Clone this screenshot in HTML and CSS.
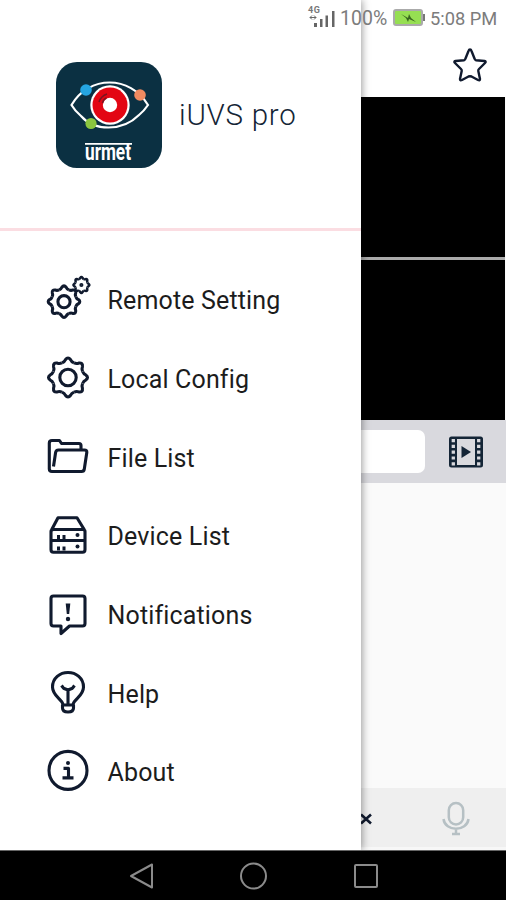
FILE: index.html
```html
<!DOCTYPE html>
<html lang="en">
<head>
<meta charset="utf-8">
<title>iUVS pro</title>
<link rel="stylesheet" href="styles.css">
</head>
<body>
<svg class="defs" aria-hidden="true">
  <defs>
    <path id="tooth" d="M-6-14.6C-3.8-15.5-3.3-16-2.6-17.8Q0-21.2 2.6-17.8C3.3-16 3.8-15.5 6-14.6"/>
    <g id="gear">
      <use href="#tooth"/><use href="#tooth" transform="rotate(45)"/><use href="#tooth" transform="rotate(90)"/><use href="#tooth" transform="rotate(135)"/>
      <use href="#tooth" transform="rotate(180)"/><use href="#tooth" transform="rotate(225)"/><use href="#tooth" transform="rotate(270)"/><use href="#tooth" transform="rotate(315)"/>
    </g>
  </defs>
</svg>
<div class="screen">
  <div class="status">
    <svg class="signal" width="28" height="24" viewBox="0 0 28 24">
      <text x="0" y="9" textLength="12">4G</text>
      <path d="M2 13.5h6M4 11.5l-2 2 2 2M6 11.5l2 2-2 2" fill="none" stroke="#666" stroke-width="1"/>
      <path d="M6 19h3v4H6zM12 15h2.500v8H12zM17.500 11.500H20V23h-2.500zM24 7h2.500v16H24z" fill="#666"/>
    </svg>
    <span class="percent">100%</span>
    <svg class="battery" width="34" height="20" viewBox="0 0 34 20">
      <rect x="2" y="2" width="28" height="15" rx="2" fill="#96df52" stroke="#aaa" stroke-width="2"/>
      <path d="M32 6v7" stroke="#777" stroke-width="2"/>
      <path d="M9 6l7 4 1-4 2 4 5 4-7-3-1 3-2-4z" fill="#38651f"/>
    </svg>
    <span class="clock">5:08 PM</span>
  </div>
  <div class="main">
    <nav class="drawer">
      <header class="brand">
        <svg class="logo" width="106" height="106" viewBox="0 0 106 106">
          <rect width="106" height="106" rx="21" fill="#0b3042"/>
          <path d="M15.500 43C33 13 74 13 92 43Q88 49 83 53C66 70 38 69 25 54Q19 49 15.500 43Z" fill="none" stroke="#fff" stroke-width="2.200"/>
          <circle cx="54" cy="43" r="19.700" fill="#fff"/>
          <circle cx="54" cy="43" r="17.500" fill="#e30613"/>
          <circle cx="54" cy="43" r="7.200" fill="#fff"/>
          <path d="M43 40q2-6 8-8M46.500 41q1-4 4-5" fill="none" stroke="#7c1420" stroke-width="1.500"/>
          <circle cx="30" cy="28" r="5.800" fill="#25a5e2"/>
          <circle cx="84" cy="33" r="5.800" fill="#f08a60"/>
          <circle cx="35" cy="61.500" r="5.600" fill="#8bc53f"/>
          <path d="M29 81.800h47" stroke="#fff" stroke-width="1.800"/>
          <text x="29" y="97.500" textLength="46" lengthAdjust="spacingAndGlyphs">urmet</text>
        </svg>
        <h1>iUVS pro</h1>
      </header>
      <ul class="menu">
        <li><svg class="icon" viewBox="-22 -22 44 44"><g transform="translate(-4 2.700) scale(.81)" stroke-width="3.800"><use href="#gear"/><circle r="7.500"/></g><g transform="translate(13.400 -14) scale(.41)" stroke-width="6"><use href="#gear"/><circle r="2" fill="#101a2e"/></g></svg><span>Remote Setting</span></li>
        <li><svg class="icon" viewBox="-22 -22 44 44"><g transform="translate(0 -.5)"><use href="#gear"/><circle r="8.200"/></g></svg><span>Local Config</span></li>
        <li><svg class="icon" viewBox="-22 -22 44 44"><path d="M-16 15.500H13.500Q16 15.500 16.300 13L18.800-3.500Q19-6 16.500-6H-9.500Q-12-6-12.400-3.500L-14.500 10.500M13-6.500V-10.500Q13-12.500 11-12.500H-6.500L-8.500-15.500H-16Q-18.700-15.500-18.700-13V13Q-18.700 15.500-16 15.500"/></svg><span>File List</span></li>
        <li><svg class="icon" viewBox="-22 -22 44 44"><path d="M-16.500-5L-10-17.300H9L16.500-5M-14.500-5.500H15Q17-5.500 17-3.500V14.500Q17 17.300 14.500 17.300H-14.500Q-17 17.300-17 14.500V-3.500Q-17-5.500-14.500-5.500ZM-17 5.500H17"/><path d="M-9.500 0v4M-4 0v4M-9.500 11.500v4M-4 11.500v4" stroke-width="3"/><g fill="#101a2e" stroke="none"><circle cx="9.500" cy="0" r="2"/><circle cx="9.500" cy="11.500" r="2"/></g></svg><span>Device List</span></li>
        <li><svg class="icon" viewBox="-22 -22 44 44"><path d="M-14.500-18H14.500Q17-18 17-15.500V9.500Q17 12 14.500 12H1.500L-7 19.500V12H-14.500Q-17 12-17 9.500V-15.500Q-17-18-14.500-18Z"/><path d="M-2.300-10.500H2.300L1.200 0H-1.200Z" fill="#101a2e" stroke="none"/><circle cy="5" r="2.200" fill="#101a2e" stroke="none"/></svg><span>Notifications</span></li>
        <li><svg class="icon" viewBox="-22 -22 44 44"><path d="M-5 12.500C-6 7-15.500 4-15.500-5C-15.500-14-8-19.500 0-19.500S15.500-14 15.500-5C15.500 4 6 7 5 12.500M-5.500 13H5.500V16Q5.500 20 0 20T-5.500 16ZM0 13V-2M-6.500-6.500L-4.500-3.800L0-2L4.500-3.800L6.500-6.500"/></svg><span>Help</span></li>
        <li><svg class="icon" viewBox="-22 -22 44 44"><g transform="translate(0 -.6)"><circle r="19"/><path d="M-4.500-2H.5V7.500M-5.500 7.500H5.500"/><circle cy="-7.500" r="2" fill="#101a2e" stroke="none"/></g></svg><span>About</span></li>
      </ul>
    </nav>
    <section class="live">
      <div class="topbar">
        <svg width="36" height="36" viewBox="-18 -18 36 36"><path d="M0-16.500Q1-16.500 1.500-15L4.700-7Q5-6 6-5.800L14.500-5Q16.500-4.500 15-3L9 3Q8 4 8.300 5L10 13Q10 15 8 14L1.500 10.500Q0 10 -1.500 10.500L-8 14Q-10 15-10 13L-8.300 5Q-8 4-9 3L-15-3Q-16.500-4.500-14.500-5L-6-5.800Q-5-6-4.700-7L-1.500-15Q-1-16.500 0-16.500Z" fill="none" stroke="#101a2e" stroke-width="2.400" stroke-linejoin="round"/></svg>
      </div>
      <div class="video"></div>
      <div class="video second"></div>
      <div class="controls">
        <div class="field"></div>
        <svg width="36" height="34" viewBox="0 0 36 34">
          <rect x="1" y="1.500" width="34" height="31" rx="2.500" fill="#142536"/>
          <rect x="9" y="4" width="18" height="26" fill="#dadade"/>
          <path d="M5.300 4v27M30.700 4v27" stroke="#dadade" stroke-width="3.300" stroke-dasharray="3.200 2.600"/>
          <path d="M13.500 11L23 17L13.500 23Z" fill="#142536"/>
        </svg>
      </div>
      <div class="blank"></div>
      <div class="tools">
        <svg class="cross" width="12" height="12" viewBox="0 0 12 12"><path d="M0 2.500L10 11.500M10 2.500L0 11.500" stroke="#101a2e" stroke-width="2.600"/></svg>
        <svg class="mic" width="30" height="36" viewBox="-15 0 30 36"><rect x="-7.200" y="3" width="14.400" height="21.500" rx="7.200"/><path d="M-12.500 19C-11 32 11 32 12.500 19M0 29V33M-4 34H4"/></svg>
      </div>
    </section>
  </div>
  <footer class="navbar">
    <svg width="28" height="28" viewBox="-14 -14 28 28"><path d="M-10 0L11-11.500V11.500Z"/></svg>
    <svg width="28" height="28" viewBox="-14 -14 28 28"><circle cx=".5" r="12.500"/></svg>
    <svg width="28" height="28" viewBox="-14 -14 28 28"><rect x="-11" y="-11" width="22" height="22" rx="1"/></svg>
  </footer>
</div>
</body>
</html>
```
FILE: styles.css
```css
* { box-sizing: border-box; }
body { margin: 0; font-family: Roboto, "Liberation Sans", sans-serif; background: #fff; }
svg { display: block; flex: none; overflow: visible; }
.defs { position: absolute; width: 0; height: 0; }
.screen { position: relative; display: flex; flex-direction: column; width: 506px; height: 900px; overflow: hidden; }

.status { position: absolute; z-index: 2; top: 0; right: 8px; height: 36px; display: flex; align-items: center; color: #7c7c7c; font-size: 20px; white-space: nowrap; }
.signal { margin-top: -5px; }
.signal text { font-size: 9px; font-weight: 700; fill: #777; }
.percent { margin-left: 4px; width: 48px; font-size: 19.5px; }
.battery { margin-left: 4px; }
.clock { margin-left: 4px; width: 68px; font-size: 18.3px; }

.main { display: flex; height: 850px; }
.drawer { position: relative; z-index: 1; width: 361px; background: #fff; box-shadow: 1px 0 8px rgba(0, 0, 0, .4); }
.brand { display: flex; gap: 17px; height: 231px; padding: 62px 0 0 56px; border-bottom: 3px solid #fbdde2; }
.logo text { font: 700 23px "Liberation Sans Narrow", Roboto, sans-serif; fill: #fff; }
h1 { margin: 0; height: 106px; line-height: 106px; font-family: Roboto, sans-serif; font-size: 29.5px; font-weight: 300; color: #142536; letter-spacing: .75px; white-space: nowrap; }
.menu { list-style: none; margin: 0; padding: 30px 0 0 46px; }
.menu li { display: flex; align-items: center; gap: 17.5px; height: 78.7px; color: #1c1c1c; font-size: 25px; letter-spacing: .15px; white-space: nowrap; }
.menu span { padding-top: 1px; }
.icon { width: 44px; height: 44px; margin-top: -3px; fill: none; stroke: #101a2e; stroke-width: 3.1; stroke-linejoin: round; }

.live { display: flex; flex-direction: column; width: 145px; background: #fafafa; }
.topbar { height: 97px; padding: 48px 0 0 91px; background: #fff; }
.video { height: 160px; margin-right: 1px; background: #000; }
.second { height: 160px; margin-top: 3px; box-shadow: 0 -3px #aaa; }
.controls { display: flex; align-items: center; height: 63px; background: #d9d9de; gap: 23px; }
.field { width: 64px; height: 43px; background: #fff; border-radius: 0 7px 7px 0; }
.blank { flex: 1; }
.tools { display: flex; align-items: center; height: 62px; background: #efefef; border-bottom: 3px solid #f7f7f7; }
.mic { margin-left: 68px; fill: none; stroke: #b6c0c4; stroke-width: 2.5; }

.navbar { position: relative; z-index: 3; display: flex; align-items: center; justify-content: center; gap: 84.5px; height: 50px; background: #000; border-top: 1px solid #666; }
.navbar svg { fill: none; stroke: #8b8b8b; stroke-width: 2; stroke-linejoin: round; }
```
